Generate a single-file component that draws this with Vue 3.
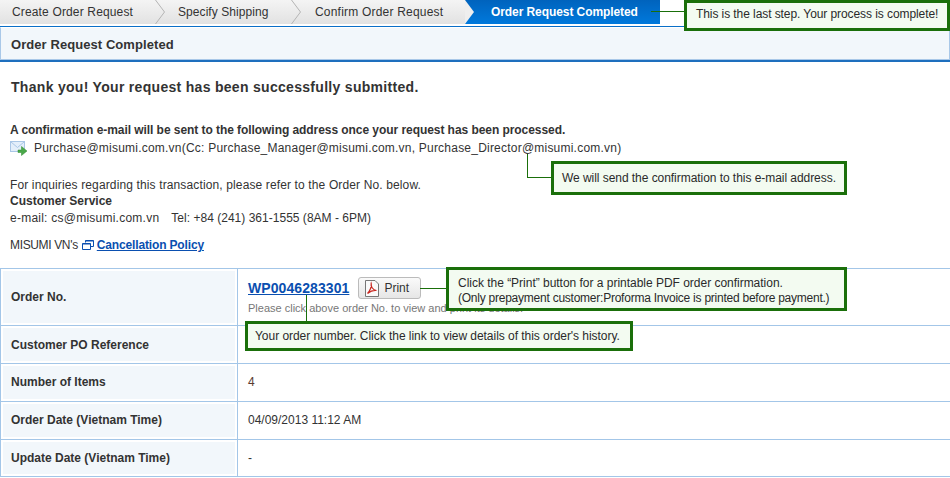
<script setup>
const rows = [
  { label: 'Customer PO Reference', value: '', h: 37 },
  { label: 'Number of Items', value: '4', h: 37, cls: 'red', up: true },
  { label: 'Order Date (Vietnam Time)', value: '04/09/2013 11:12 AM', h: 37, up: true },
  { label: 'Update Date (Vietnam Time)', value: '-', h: 36 }
]
</script>

<template>
  <div class="page">
    <div class="steps">
      <div class="step s1">Create Order Request<svg class="chev" width="10" height="24" viewBox="0 0 10 24"><path d="M0.5 0 L9.5 12 L0.5 24" fill="none" stroke="#b4b4b4"/></svg></div>
      <div class="step s2">Specify Shipping<svg class="chev" width="10" height="24" viewBox="0 0 10 24"><path d="M0.5 0 L9.5 12 L0.5 24" fill="none" stroke="#b4b4b4"/></svg></div>
      <div class="step s3">Confirm Order Request</div>
      <div class="step active"><svg class="tip" width="11" height="24" viewBox="0 0 11 24"><path d="M0 0 L9 12 L0 24 Z" fill="#eeeeee"/></svg>Order Request Completed</div>
    </div>
    <div class="head"><div class="head-in">Order Request Completed</div></div>

    <div class="body">
      <h2 class="thanks">Thank you! Your request has been successfully submitted.</h2>
      <p class="b conf">A confirmation e-mail will be sent to the following address once your request has been processed.</p>
      <p class="mail">
        <svg class="mailicon" width="18" height="16" viewBox="0 0 18 16">
          <rect x="0.5" y="1.5" width="14" height="10" fill="#e3eefa" stroke="#a9c6e6"/>
          <path d="M1 2 L7.5 7.5 L14 2" fill="none" stroke="#a9c6e6"/>
          <path d="M8 10 h3.5 v-3.5 l5.5 4.5 l-5.5 4.5 v-3 h-3.5 z" fill="#4aa84a" stroke="#2f8a2f" stroke-width=".5"/>
        </svg>Purchase@misumi.com.vn(Cc: Purchase_Manager@misumi.com.vn, Purchase_Director@misumi.com.vn)
      </p>
      <p class="inq">For inquiries regarding this transaction, please refer to the Order No. below.</p>
      <p class="b line">Customer Service</p>
      <p class="line contact"><span class="em">e-mail: cs@misumi.com.vn</span><span class="tel">Tel: +84 (241) 361-1555 (8AM - 6PM)</span></p>
      <p class="policy"><span class="vn">MISUMI VN's</span><svg class="win" width="12" height="10" viewBox="0 0 12 10"><path d="M3.5 2.5 V0.5 H11.5 V6.5 H8.5 M0.5 3.5 H8.5 V9.5 H0.5 Z M0.5 4 H8.5 M3.5 1 H11.5" fill="none" stroke="#0a4fb0"/></svg><a class="link tight">Cancellation Policy</a></p>
    </div>

    <div class="table">
      <div class="row first">
        <div class="th"><span>Order No.</span></div>
        <div class="td order">
          <div class="order-line">
            <a class="link num">WP0046283301</a>
            <span class="btn">
              <svg width="16" height="17" viewBox="0 0 16 17">
                <path d="M1.5 0.5 H11 L14.5 4 V16.5 H1.5 Z" fill="#fafafa" stroke="#777"/>
                <path d="M3.5 13.5 C6 11 8 6 7.2 3.5 C6.6 6 8.5 10 12.5 10.5 C9.5 10 6 11.5 3.5 13.5 Z" fill="none" stroke="#c8261f" stroke-width="1.2"/>
              </svg>
              Print
            </span>
          </div>
          <div class="note">Please click above order No. to view and print its details.</div>
        </div>
      </div>
      <div v-for="r in rows" :key="r.label" class="row" :class="{ up: r.up }" :style="{ height: r.h + 'px' }">
        <div class="th"><span>{{ r.label }}</span></div>
        <div class="td" :class="r.cls">{{ r.value }}</div>
      </div>
    </div>

    <!-- annotation layer -->
    <i class="ln l1"></i>
    <div class="tip-box t1">This is the last step. Your process is complete!</div>

    <i class="ln l2a"></i>
    <i class="ln l2b"></i>
    <div class="tip-box t2">We will send the confirmation to this e-mail address.</div>

    <i class="ln l3"></i>
    <div class="tip-box t3">Click the “Print” button for a printable PDF order confirmation.<br><span class="t3b">(Only prepayment customer:Proforma Invoice is printed before payment.)</span></div>

    <i class="ln l4"></i>
    <div class="tip-box t4">Your order number. Click the link to view details of this order's history.</div>
  </div>
</template>

<style scoped>
.page {
  position: relative;
  width: 950px;
  height: 478px;
  overflow: hidden;
  background: #fff;
  font-family: "Liberation Sans", Arial, sans-serif;
  font-size: 12px;
  color: #333;
}
p, h2 { margin: 0; }
.steps { display: flex; height: 24px; }
.step {
  position: relative;
  height: 24px;
  line-height: 24px;
  background: linear-gradient(#f4f4f4, #e2e2e2);
  font-size: 12px;
  color: #333;
  white-space: nowrap;
}
.s1 { width: 155px; padding-left: 12px; box-sizing: border-box; letter-spacing: 0.15px; }
.s2 { width: 136px; padding-left: 23px; box-sizing: border-box; letter-spacing: 0.07px; }
.s3 { width: 174px; padding-left: 24px; box-sizing: border-box; letter-spacing: 0.2px; }
.active {
  width: 195px;
  padding-left: 26px;
  box-sizing: border-box;
  background: linear-gradient(#0063bd, #0079dc);
  color: #fff;
  font-weight: bold;
  letter-spacing: -0.08px;
}
.chev { position: absolute; top: 0; z-index: 1; }
.s1 .chev { left: 155px; }
.s2 .chev { left: 136px; }
.tip { position: absolute; left: 0; top: 0; }
.head {
  margin-top: 2px;
  border-top: 1px solid #0a6fc8;
  border-bottom: 2px solid #1e6fbe;
  height: 33px;
}
.head-in {
  height: 31px;
  border: 1px solid #a9c8e8;
  border-top-color: #fff;
  background: #f2f7fb;
  padding-left: 10px;
  line-height: 33px;
  font-weight: bold;
  color: #333;
  font-size: 13px;
  letter-spacing: 0.07px;
}
.body { padding-left: 10px; letter-spacing: 0.22px; }
.thanks { font-size: 14px; font-weight: bold; line-height: 16px; margin-top: 17px; margin-left: 1px; letter-spacing: 0.3px; }
.b { font-weight: bold; }
.conf { margin-top: 28px; line-height: 15px; letter-spacing: -0.06px; }
.mail { display: flex; align-items: center; height: 18px; line-height: 18px; margin-top: 1px; }
.mailicon { margin-right: 6px; flex: none; }
.inq { margin-top: 20px; line-height: 16px; letter-spacing: 0.13px; }
.line { line-height: 16.5px; letter-spacing: 0; }
.contact { display: flex; }
.em { letter-spacing: 0.24px; }
.tel { margin-left: 12px; letter-spacing: 0.02px; }
.policy { margin-top: 11px; line-height: 17px; letter-spacing: 0; }
.vn { letter-spacing: -0.35px; }
.win { vertical-align: -1px; margin: 0 3px 0 4px; }
.link { color: #0a4fb0; font-weight: bold; text-decoration: underline; }
.tight { letter-spacing: -0.15px; }
.table {
  position: absolute;
  left: 0;
  top: 268px;
  width: 950px;
  border-top: 1px solid #a3c6e8;
}
.row { display: flex; border-bottom: 1px solid #a3c6e8; }
.row.first { height: 56px; }
.th {
  width: 238px;
  flex: none;
  box-sizing: border-box;
  border-left: 1px solid #a3c6e8;
  border-right: 1px solid #a3c6e8;
  padding: 2px;
  background: #fff;
  display: flex;
}
.th span {
  flex: 1;
  background: #f2f7fb;
  font-weight: bold;
  padding-left: 8px;
  display: flex;
  align-items: center;
}
.up .th span { padding-bottom: 2px; }
.up .td { padding-bottom: 2px; }
.td { flex: 1; padding-left: 10px; display: flex; align-items: center; color: #333; }
.red { color: #5a3a30; }
.order { display: block; padding-top: 8px; }
.order-line { display: flex; align-items: center; height: 22px; }
.num { font-size: 14px; letter-spacing: 0.08px; }
.btn {
  display: flex;
  align-items: center;
  gap: 4px;
  margin-left: 9px;
  width: 63px;
  height: 22px;
  box-sizing: border-box;
  padding-left: 5px;
  border: 1px solid #bbb;
  border-radius: 3px;
  background: linear-gradient(#fafafa, #e6e6e6);
}
.note { font-size: 11px; color: #777; margin-top: 2px; line-height: 14px; }
.ln { position: absolute; background: #1a6f0a; display: block; }
.l1 { left: 651px; top: 11px; width: 34px; height: 1px; }
.l2a { left: 527px; top: 154px; width: 1px; height: 24px; }
.l2b { left: 527px; top: 177px; width: 25px; height: 1px; }
.l3 { left: 420px; top: 288px; width: 27px; height: 1px; }
.l4 { left: 306px; top: 295px; width: 1px; height: 27px; }
.tip-box {
  position: absolute;
  box-sizing: border-box;
  border: 3px solid #1a6f0a;
  background: #f3fbf1;
  font-family: "Liberation Sans", Arial, sans-serif;
  font-size: 12px;
  color: #2a2a2a;
  padding-left: 9px;
  display: flex;
  align-items: center;
  white-space: nowrap;
}
.t1 { left: 684px; top: 0; width: 266px; height: 31px; padding-bottom: 4px; letter-spacing: -0.08px; }
.t2 { left: 551px; top: 161px; width: 296px; height: 34px; padding-left: 8px; letter-spacing: -0.05px; }
.t3 { left: 446px; top: 267px; width: 401px; height: 44px; display: block; line-height: 15px; padding-top: 6px; letter-spacing: -0.02px; }
.t3b { letter-spacing: -0.24px; }
.t4 { left: 245px; top: 321px; width: 388px; height: 30px; padding-left: 7px; letter-spacing: -0.04px; }
</style>

<style>
body { margin: 0; }
</style>
